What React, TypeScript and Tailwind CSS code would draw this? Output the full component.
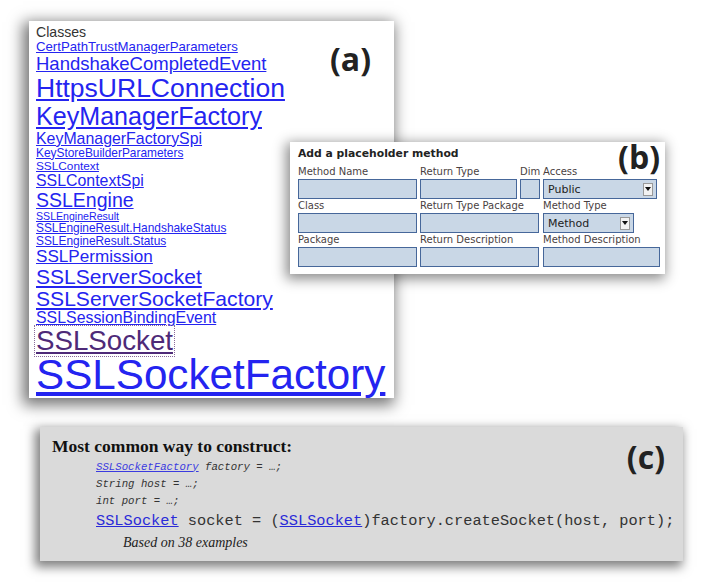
import type { ReactNode } from 'react';

const classes: { name: string; size: number; lh?: number; visited?: boolean }[] = [
  { name: 'CertPathTrustManagerParameters', size: 13.2 },
  { name: 'HandshakeCompletedEvent', size: 18.5 },
  { name: 'HttpsURLConnection', size: 26.5 },
  { name: 'KeyManagerFactory', size: 25.1 },
  { name: 'KeyManagerFactorySpi', size: 15.9 },
  { name: 'KeyStoreBuilderParameters', size: 11.9 },
  { name: 'SSLContext', size: 11.8 },
  { name: 'SSLContextSpi', size: 15.9 },
  { name: 'SSLEngine', size: 19.5 },
  { name: 'SSLEngineResult', size: 10.6 },
  { name: 'SSLEngineResult.HandshakeStatus', size: 11.9 },
  { name: 'SSLEngineResult.Status', size: 11.9 },
  { name: 'SSLPermission', size: 17.1, lh: 1.06 },
  { name: 'SSLServerSocket', size: 21, lh: 1.04 },
  { name: 'SSLServerSocketFactory', size: 21.1, lh: 1.04 },
  { name: 'SSLSessionBindingEvent', size: 15.9, lh: 1.04 },
  { name: 'SSLSocket', size: 27.7, lh: 1.06, visited: true },
  { name: 'SSLSocketFactory', size: 42.2, lh: 0.9 },
];

function Tag({ children, className }: { children: ReactNode; className: string }) {
  return (
    <span
      className={`absolute font-['Open_Sans',sans-serif] text-[32px] font-bold leading-none text-[#222] ${className}`}
    >
      {children}
    </span>
  );
}

function Field({ label, width, span }: { label?: string; width?: string; span?: string }) {
  return (
    <div className={`flex flex-col ${span ?? ''}`}>
      <span className="h-[14px] whitespace-nowrap text-[10px] leading-[14px] text-[#4a3f3f]">{label}</span>
      <div className={`h-[20px] border-[1.5px] border-[#46679a] bg-[#c9d7e6] ${width ?? 'w-full'}`} />
    </div>
  );
}

function Select({ label, value, width }: { label: string; value: string; width: string }) {
  return (
    <div className="flex flex-col">
      <span className="h-[14px] whitespace-nowrap text-[10px] leading-[14px] text-[#4a3f3f]">{label}</span>
      <div
        className={`flex h-[20px] items-center justify-between border-[1.5px] border-[#46679a] bg-[#c9d7e6] pl-[4px] pr-[3px] ${width}`}
      >
        <span className="text-[11px] leading-none text-[#222]">{value}</span>
        <span className="flex h-[13px] w-[10px] items-center justify-center border border-[#999] bg-[#f2f2f2]">
          <svg width="6" height="4" viewBox="0 0 6 4">
            <path d="M0 0h6L3 4z" fill="#111" />
          </svg>
        </span>
      </div>
    </div>
  );
}

export default function App() {
  return (
    <div className="relative h-[585px] w-[711px] overflow-hidden bg-white">
      {/* (a) class cloud */}
      <div className="relative ml-[29px] mt-[21px] h-[377px] w-[365px] bg-white pl-[7px] pt-[3.5px] shadow-[-3px_4px_14px_3px_rgba(0,0,0,0.55)] font-['Liberation_Sans',Arial,sans-serif]">
        <div className="flex flex-col items-start">
          <span className="text-[14.1px] leading-[1.08] text-[#333]">Classes</span>
          {classes.map((c) => (
            <a
              key={c.name}
              href="#"
              className={`whitespace-nowrap underline ${
                c.visited
                  ? '-ml-px px-px text-[#4e2a78] outline-1 outline-dotted outline-[#8a6a9a]'
                  : 'text-[#2424f0]'
              }`}
              style={{ fontSize: `${c.size}px`, lineHeight: c.lh ?? 1.08 }}
            >
              {c.name}
            </a>
          ))}
        </div>
        <Tag className="right-[23px] top-[22px]">(a)</Tag>
      </div>

      {/* (b) placeholder method form */}
      <div className="absolute left-[290px] top-[142px] h-[132px] w-[375px] bg-white pl-[8px] pt-[4px] shadow-[-2px_3px_12px_2px_rgba(0,0,0,0.45)] font-['DejaVu_Sans',Verdana,sans-serif]">
        <div className="h-[15px] text-[10.8px] font-bold leading-[15px] text-[#222]">Add a placeholder method</div>
        <div className="mt-[4px] grid grid-cols-[119px_97px_20px_117px] gap-x-[3px]">
          <Field label="Method Name" />
          <Field label="Return Type" />
          <Field label="Dim" />
          <Select label="Access" value="Public" width="w-[114px]" />
          <Field label="Class" />
          <Field label="Return Type Package" span="col-span-2" width="w-[119px]" />
          <Select label="Method Type" value="Method" width="w-[91px]" />
          <Field label="Package" />
          <Field label="Return Description" span="col-span-2" width="w-[119px]" />
          <Field label="Method Description" />
        </div>
        <Tag className="right-[5px] top-[-1px]">(b)</Tag>
      </div>

      {/* (c) most common construction */}
      <div className="relative ml-[40px] mt-[29px] h-[134px] w-[643px] bg-[#dadada] pl-[12px] pt-[9px] shadow-[-3px_4px_10px_2px_rgba(0,0,0,0.5)]">
        <div className="font-['Liberation_Serif','Times_New_Roman',serif] text-[17.5px] font-bold leading-[20px] text-[#111]">
          Most common way to construct:
        </div>
        <div className="mt-[2.5px] pl-[44px] font-['Liberation_Mono','Courier_New',monospace] text-[#333]">
          <div className="text-[10.7px] italic leading-[17px]">
            <a href="#" className="text-[#3a3ae0] underline">SSLSocketFactory</a> factory = …;
          </div>
          <div className="text-[10.7px] italic leading-[17px]">String host = …;</div>
          <div className="text-[10.7px] italic leading-[17px]">int port = …;</div>
          <div className="mt-[1.5px] whitespace-nowrap text-[15.3px] leading-[20px]">
            <a href="#" className="text-[#2a2ad8] underline">SSLSocket</a> socket = (
            <a href="#" className="text-[#2a2ad8] underline">SSLSocket</a>)factory.createSocket(host, port);
          </div>
        </div>
        <div className="mt-[2.5px] pl-[71px] font-['Liberation_Serif','Times_New_Roman',serif] text-[14px] italic leading-[18px] text-[#222]">
          Based on 38 examples
        </div>
        <Tag className="right-[18px] top-[14px]">(c)</Tag>
      </div>
    </div>
  );
}
